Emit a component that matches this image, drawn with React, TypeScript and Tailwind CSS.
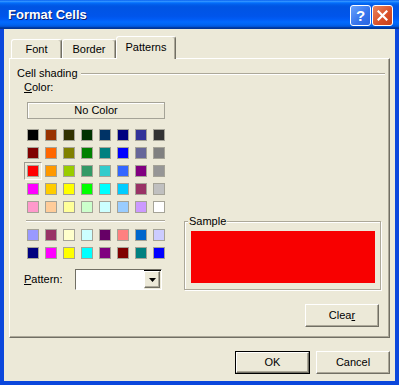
const mainColors = [
  ['#000000', '#993300', '#333300', '#003300', '#003366', '#000080', '#333399', '#333333'],
  ['#800000', '#ff6600', '#808000', '#008000', '#008080', '#0000ff', '#666699', '#808080'],
  ['#ff0000', '#ff9900', '#99cc00', '#339966', '#33cccc', '#3366ff', '#800080', '#969696'],
  ['#ff00ff', '#ffcc00', '#ffff00', '#00ff00', '#00ffff', '#00ccff', '#993366', '#c0c0c0'],
  ['#ff99cc', '#ffcc99', '#ffff99', '#ccffcc', '#ccffff', '#99ccff', '#cc99ff', '#ffffff'],
]

const chartColors = [
  ['#9999ff', '#993366', '#ffffcc', '#ccffff', '#660066', '#ff8080', '#0066cc', '#ccccff'],
  ['#000080', '#ff00ff', '#ffff00', '#00ffff', '#800080', '#800000', '#008080', '#0000ff'],
]

const raised =
  'border border-t-white border-l-white border-r-[#716f64] border-b-[#716f64] shadow-[inset_-1px_-1px_0_#aca899] bg-[#ece9d8]'

function Swatch({ color, selected = false }: { color: string; selected?: boolean }) {
  return (
    <div className="relative h-[12px] w-[12px]">
      {selected && (
        <span className="absolute -inset-[3px] border border-t-[#9d9b90] border-l-[#9d9b90] border-r-white border-b-white" />
      )}
      <div className="relative h-full w-full border border-[#a5a397]" style={{ background: color }} />
    </div>
  )
}

function SwatchGrid({ rows, selected }: { rows: string[][]; selected?: string }) {
  return (
    <div className="ml-[3px] grid w-[138px] grid-cols-8 gap-[6px]">
      {rows.flat().map((c, i) => (
        <Swatch key={i} color={c} selected={c === selected && i === 16} />
      ))}
    </div>
  )
}

function Tab({ label, active = false, width }: { label: string; active?: boolean; width: string }) {
  return (
    <div
      className={`flex items-center justify-center rounded-t-[3px] border-l border-t border-white border-r border-r-[#716f64] shadow-[inset_-1px_0_0_#aca899] bg-[#ece9d8] ${width} ${
        active ? 'relative z-10 -mb-px h-[23px] pb-[2px]' : 'h-[19px]'
      }`}
    >
      {label}
    </div>
  )
}

export default function App() {
  return (
    <div className="flex h-[385px] w-[399px] flex-col bg-[#0b47dc] font-['Liberation_Sans',Arial,sans-serif] text-[11px] leading-[13px] text-black select-none">
      {/* title bar */}
      <div className="flex h-[29px] items-start bg-[linear-gradient(to_bottom,#0058ee_0%,#3593ff_4%,#288eff_6%,#127dff_8%,#036ffc_10%,#0262ee_14%,#0057e5_20%,#0054e3_24%,#0055eb_56%,#005bf5_66%,#026afe_76%,#0062ef_86%,#0052d6_92%,#0040ab_94%,#003092_100%)] pl-[8px] pr-[6px]">
        <div className="mt-[7px] text-[13px] font-bold leading-[16px] text-white [text-shadow:1px_1px_0_#0a1e6e]">Format Cells</div>
        <div className="ml-auto mt-[5px] flex gap-[1px]">
          <div className="flex h-[21px] w-[21px] items-center justify-center rounded-[3px] border border-white bg-[linear-gradient(135deg,#6aa3fc,#3573ec_60%,#2a64e0)] text-[15px] font-bold leading-none text-white">
            ?
          </div>
          <div className="flex h-[21px] w-[21px] items-center justify-center rounded-[3px] border border-white bg-[linear-gradient(135deg,#e9865f,#d94f28_60%,#c8401c)]">
            <svg width="11" height="11" viewBox="0 0 11 11">
              <path d="M1.5 1.5 L9.5 9.5 M9.5 1.5 L1.5 9.5" stroke="white" strokeWidth="2.2" strokeLinecap="square" />
            </svg>
          </div>
        </div>
      </div>

      {/* client area */}
      <div className="flex flex-1 flex-col border-x-4 border-b-4 border-[#0b47dc] bg-[#ece9d8] px-[5px] pt-[8px]">
        {/* tabs */}
        <div className="flex h-[21px] items-end pl-[2px]">
          <Tab label="Font" width="w-[51px]" />
          <Tab label="Border" width="w-[54px]" />
          <Tab label="Patterns" width="w-[60px]" active />
        </div>

        {/* panel */}
        <div className="flex h-[280px] flex-col border border-t-white border-l-white border-r-[#716f64] border-b-[#716f64] pl-[7px] pr-[4px] pt-[8px] shadow-[inset_-1px_-1px_0_#aca899]">
          <div className="flex items-center">
            <span>Cell shading</span>
            <div className="ml-[3px] h-[2px] flex-1 border-t border-[#aca899] border-b border-b-white" />
          </div>

          <div className="mt-[1px] flex">
            {/* left column */}
            <div className="ml-[7px] flex w-[141px] flex-col">
              <div>
                <span className="underline">C</span>olor:
              </div>
              <div className="ml-[3px] mt-[8px] flex h-[17px] w-[138px] items-center justify-center border border-[#a5a397] shadow-[inset_1px_1px_0_#fff]">
                No Color
              </div>
              <div className="mt-[10px]">
                <SwatchGrid rows={mainColors} selected="#ff0000" />
              </div>
              <div className="ml-[2px] mt-[7px] h-[2px] w-[139px] border-t border-[#aca899] border-b border-b-white" />
              <div className="mt-[7px]">
                <SwatchGrid rows={chartColors} />
              </div>
              <div className="mt-[10px] flex items-center">
                <div className="w-[51px]">
                  <span className="underline">P</span>attern:
                </div>
                <div className="flex h-[21px] w-[87px] border border-t-[#716f64] border-l-[#716f64] border-r-white border-b-white shadow-[inset_1px_1px_0_#000]">
                  <div className="flex-1 bg-white" />
                  <div className={`flex h-[17px] w-[16px] mt-[1px] mr-[1px] items-center justify-center ${raised}`}>
                    <svg width="7" height="4" viewBox="0 0 7 4">
                      <path d="M0 0 H7 L3.5 4 Z" fill="#000" />
                    </svg>
                  </div>
                </div>
              </div>
            </div>

            {/* right column */}
            <div className="ml-auto mr-[4px] mt-[140px] flex flex-col">
              <div className="relative h-[69px] w-[197px] border border-[#aca899] shadow-[inset_1px_1px_0_#fff,1px_1px_0_#fff] pl-[6px] pt-[9px]">
                <span className="absolute -top-[7px] left-[3px] bg-[#ece9d8] px-[1px]">Sample</span>
                <div className="h-[52px] w-[184px] bg-[#f80000]" />
              </div>
              <div className={`ml-[121px] mt-[14px] flex h-[23px] w-[74px] items-center justify-center ${raised}`}>
                Clea<span className="underline">r</span>
              </div>
            </div>
          </div>
        </div>

        {/* dialog buttons */}
        <div className="mt-[13px] flex justify-end gap-[6px]">
          <div className="h-[23px] w-[75px] border border-black">
            <div className={`flex h-full w-full items-center justify-center ${raised}`}>OK</div>
          </div>
          <div className={`flex h-[23px] w-[74px] items-center justify-center ${raised}`}>Cancel</div>
        </div>
      </div>
    </div>
  )
}
